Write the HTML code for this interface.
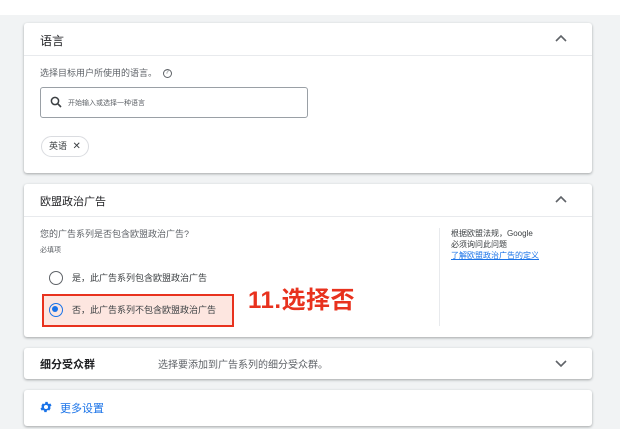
<!DOCTYPE html>
<html><head><meta charset="utf-8"><style>
*{margin:0;padding:0;box-sizing:border-box}
body{width:620px;height:429px;background:#fff;font-family:"Liberation Sans","Noto Sans CJK SC",sans-serif;position:relative;overflow:hidden;color:#3c4043}
.bg{position:absolute;left:0;top:15px;width:620px;height:414px;background:#f1f3f4}
.card{position:absolute;left:24px;width:568px;background:#fff;border-radius:3px;box-shadow:0 1px 2px rgba(60,64,67,.3),0 1px 3px rgba(60,64,67,.15)}
.abs{position:absolute;white-space:nowrap}
</style></head><body>
<div class="bg"></div>
<div class="card" style="top:23px;height:150px">
 <div class="abs" style="left:16px;top:9px;font-size:12px;color:#202124">语言</div>
 <svg class="abs" style="left:530px;top:10px" width="14" height="10" viewBox="0 0 14 10"><path d="M2 8L7 3L12 8" stroke="#5f6368" stroke-width="1.6" fill="none"/></svg>
 <div class="abs" style="left:0;top:32px;width:568px;height:1px;background:#e8eaed"></div>
 <div class="abs" style="left:16px;top:43px;font-size:9px;color:#5f6368">选择目标用户所使用的语言。 <span style="display:inline-block;width:9px;height:9px;border:1px solid #5f6368;border-radius:50%;font-size:6px;line-height:7px;text-align:center;margin-left:3px;vertical-align:middle">?</span></div>
 <div class="abs" style="left:16px;top:64px;width:268px;height:31px;border:1px solid #9aa0a6;border-radius:3px"></div>
 <svg class="abs" style="left:26px;top:73px" width="12" height="12" viewBox="0 0 12 12"><circle cx="5" cy="5" r="3.6" stroke="#3c4043" stroke-width="1.5" fill="none"/><path d="M7.6 7.6L11 11" stroke="#3c4043" stroke-width="1.6"/></svg>
 <div class="abs" style="left:44px;top:75px;font-size:7px;color:#5f6368">开始输入或选择一种语言</div>
 <div class="abs" style="left:17px;top:113px;width:48px;height:21px;border:1px solid #dadce0;border-radius:11px;font-size:9px;line-height:19px;padding-left:7px;color:#3c4043">英语 <span style="margin-left:3px;font-size:10px">✕</span></div>
</div>
<div class="card" style="top:184px;height:153px">
 <div class="abs" style="left:16px;top:9px;font-size:11px;color:#202124">欧盟政治广告</div>
 <svg class="abs" style="left:530px;top:10px" width="14" height="10" viewBox="0 0 14 10"><path d="M2 8L7 3L12 8" stroke="#5f6368" stroke-width="1.6" fill="none"/></svg>
 <div class="abs" style="left:0;top:32px;width:568px;height:1px;background:#e8eaed"></div>
 <div class="abs" style="left:16px;top:43px;font-size:9px;color:#5f6368">您的广告系列是否包含欧盟政治广告?</div>
 <div class="abs" style="left:16px;top:61px;font-size:7px;color:#5f6368">必填项</div>
 <div class="abs" style="left:25px;top:87px;width:14px;height:14px;border:1.6px solid #5f6368;border-radius:50%"></div>
 <div class="abs" style="left:48px;top:87px;font-size:9px;color:#3c4043">是，此广告系列包含欧盟政治广告</div>
 <div class="abs" style="left:18px;top:110px;width:192px;height:33px;border:2px solid #e8321e;background:#fde6e0"></div>
 <div class="abs" style="left:25px;top:119px;width:14px;height:14px;border:1.6px solid #1a73e8;border-radius:50%"><div style="width:6px;height:6px;background:#1a73e8;border-radius:50%;margin:2.4px"></div></div>
 <div class="abs" style="left:48px;top:119px;font-size:9px;color:#3c4043">否，此广告系列不包含欧盟政治广告</div>
 <div class="abs" style="left:224px;top:96px;font-size:24px;color:#e8321e;font-weight:bold;letter-spacing:0.5px">11.选择否</div>
 <div class="abs" style="left:415px;top:44px;width:1px;height:98px;background:#e8eaed"></div>
 <div class="abs" style="left:427px;top:44px;font-size:8px;line-height:11px;color:#3c4043">根据欧盟法规，Google<br>必须询问此问题<br><span style="color:#1a73e8;text-decoration:underline">了解欧盟政治广告的定义</span></div>
</div>
<div class="card" style="top:348px;height:31px">
 <div class="abs" style="left:16px;top:8px;font-size:11px;color:#202124;font-weight:bold">细分受众群</div>
 <div class="abs" style="left:134px;top:8px;font-size:10px;color:#5f6368">选择要添加到广告系列的细分受众群。</div>
 <svg class="abs" style="left:530px;top:11px" width="14" height="10" viewBox="0 0 14 10"><path d="M2 2L7 7L12 2" stroke="#5f6368" stroke-width="1.6" fill="none"/></svg>
</div>
<div class="card" style="top:390px;height:36px">
 <svg class="abs" style="left:15px;top:10px" width="14" height="14" viewBox="0 0 24 24"><path fill="#1a73e8" d="M19.4 13a7.5 7.5 0 000-2l2.1-1.6-2-3.5-2.5 1a7.6 7.6 0 00-1.7-1l-.4-2.6h-4l-.4 2.6a7.6 7.6 0 00-1.7 1l-2.5-1-2 3.5L4.6 11a7.5 7.5 0 000 2l-2.1 1.6 2 3.5 2.5-1c.5.4 1.1.8 1.7 1l.4 2.6h4l.4-2.6c.6-.2 1.2-.6 1.7-1l2.5 1 2-3.5zM12 15.5a3.5 3.5 0 110-7 3.5 3.5 0 010 7z"/></svg>
 <div class="abs" style="left:36px;top:10px;font-size:11px;color:#1a73e8">更多设置</div>
</div>
</body></html>
